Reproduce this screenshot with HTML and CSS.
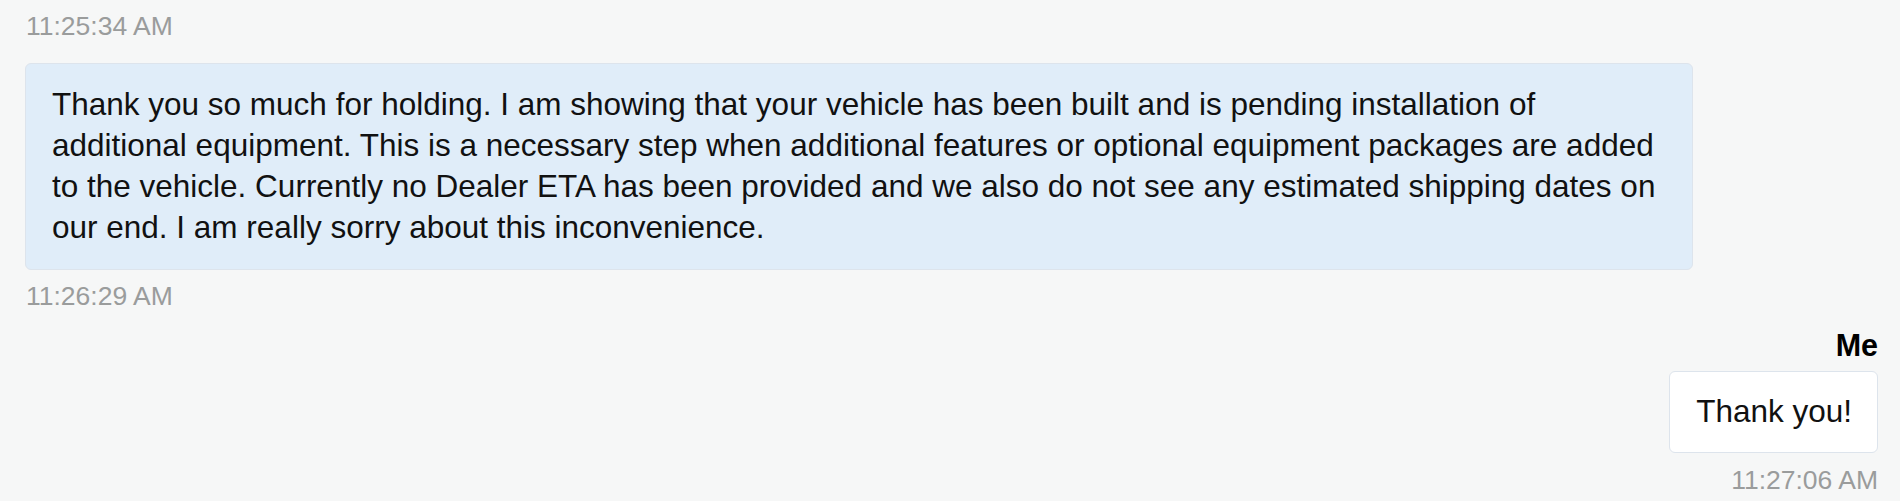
FILE: index.html
```html
<!DOCTYPE html>
<html lang="en">
<head>
<meta charset="utf-8">
<title>Chat</title>
<link rel="stylesheet" href="styles.css">
</head>
<body>
<div class="chat">
  <div class="msg msg-agent">
    <div class="ts ts-top">11:25:34 AM</div>
    <div class="bubble bubble-agent">Thank you so much for holding. I am showing that your vehicle has been built and is pending installation of<br>additional equipment. This is a necessary step when additional features or optional equipment packages are added<br>to the vehicle. Currently no Dealer ETA has been provided and we also do not see any estimated shipping dates on<br>our end. I am really sorry about this inconvenience.</div>
    <div class="ts ts-after">11:26:29 AM</div>
  </div>
  <div class="msg msg-me">
    <div class="sender">Me</div>
    <div class="bubble bubble-me">Thank you!</div>
    <div class="ts ts-after-me">11:27:06 AM</div>
  </div>
</div>
</body>
</html>
```

FILE: styles.css
```css
html, body {
  margin: 0;
  padding: 0;
  background: #f6f7f7;
}
body {
  font-family: "Liberation Sans", Arial, sans-serif;
  color: #111;
  height: 501px;
  overflow: hidden;
}
.chat {
  display: flex;
  flex-direction: column;
  padding: 11px 22px 0 23px;
}
.msg {
  display: flex;
  flex-direction: column;
}
.msg-agent {
  align-items: flex-start;
}
.msg-me {
  align-items: flex-end;
}
.ts {
  font-size: 26.5px;
  line-height: 30px;
  color: #9a9c9c;
}
.msg-agent .ts {
  padding-left: 3px;
}
.ts-after {
  margin-top: 11px;
}
.ts-after-me {
  margin-top: 12px;
}
.bubble {
  font-size: 31.5px;
  line-height: 41px;
  border: 1px solid #dde4ec;
  border-radius: 6px;
  padding: 20px 26px 21px;
  box-sizing: border-box;
}
.bubble-agent {
  margin-top: 22px;
  margin-left: 2px;
  width: 1668px;
  padding-right: 8px;
  background: #e0edf9;
}
.bubble-me {
  background: #ffffff;
  margin-top: 6px;
  padding: 19px 25px 20px 26px;
}
.sender {
  margin-top: 14px;
  font-size: 30.5px;
  line-height: 40px;
  font-weight: bold;
  color: #000;
}
```
